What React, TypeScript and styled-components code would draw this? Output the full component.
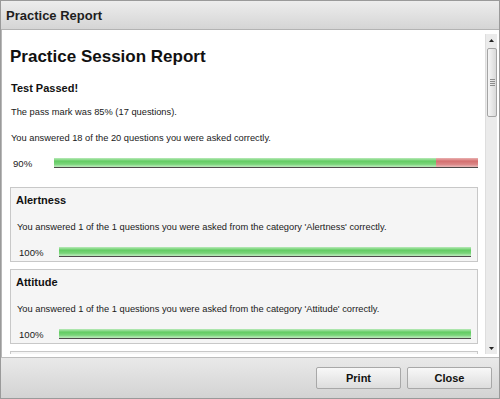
import React from 'react'
import styled, {createGlobalStyle} from 'styled-components'

const GlobalStyle = createGlobalStyle`
  html, body {
    margin: 0;
    padding: 0;
    background: #fff;
  }
  body {
    font-family: "Liberation Sans", Arial, sans-serif;
    color: #111;
  }
  * {
    box-sizing: border-box;
  }
`

const Window = styled.div`
  width: 500px;
  height: 399px;
  display: flex;
  flex-direction: column;
  border: 1px solid #9a9a9a;
  background: #fff;
  overflow: hidden;
`

const TitleBar = styled.div`
  flex: none;
  height: 29px;
  display: flex;
  align-items: center;
  padding-left: 5px;
  background: linear-gradient(to bottom, #ededed, #d5d5d5);
  border-bottom: 1px solid #b3b3b3;
  font-size: 13px;
  font-weight: bold;
  color: #1e1e1e;
`

const Body = styled.div`
  flex: 1;
  min-height: 0;
  display: flex;
  padding: 4px 2px 3px 1px;
  border-left: 1px solid #b8b8b8;
  background: #fff;
`

const Viewport = styled.div`
  flex: 1;
  min-width: 0;
  overflow: hidden;
  padding: 0 7px 0 7px;
`

const Heading = styled.h1`
  margin: 13px 0 0;
  font-size: 17px;
  line-height: 20px;
  font-weight: bold;
  color: #111;
`

const Status = styled.h2`
  margin: 14px 0 0 1px;
  font-size: 11px;
  line-height: 14px;
  font-weight: bold;
  color: #111;
`

const Para = styled.p<{$gap?: number}>`
  margin: ${p => p.$gap ?? 14}px 0 0 1px;
  font-size: 9.3px;
  line-height: 12px;
  color: #1a1a1a;
`

const ProgressRow = styled.div<{$gap: number; $label: number}>`
  display: flex;
  align-items: flex-end;
  margin-top: ${p => p.$gap}px;
  padding-left: 3px;
  height: 10px;

  & > span {
    flex: none;
    width: ${p => p.$label}px;
    font-size: 9.6px;
    line-height: 8px;
    color: #1a1a1a;
  }
`

const Track = styled.div`
  flex: 1;
  height: 10px;
  display: flex;
  background: linear-gradient(to bottom, #eab2b2 0%, #d46f6f 35%, #dc8a8a 75%, #e7b0b0 90%);
  border-bottom: 1px solid #4e4a4a;
`

const Fill = styled.div`
  height: 100%;
  background: linear-gradient(to bottom, #b9eab9 0%, #63cc63 35%, #7bd57b 70%, #b1e6b1 90%);
`

const Panel = styled.section<{$first?: boolean}>`
  margin-top: ${p => (p.$first ? 19 : 7)}px;
  padding: 5px 6px 4px 5px;
  border: 1px solid #c8c8c8;
  background: #f5f5f5;
`

const PanelTitle = styled.h3`
  margin: 0;
  font-size: 11px;
  line-height: 14px;
  font-weight: bold;
  color: #111;
`

const ScrollBar = styled.div`
  flex: none;
  width: 12px;
  display: flex;
  flex-direction: column;
  background: #ebebeb;
  border-left: 1px solid #dedede;
`

const ArrowButton = styled.div`
  flex: none;
  height: 12px;
  display: flex;
  align-items: center;
  justify-content: center;
`

const Thumb = styled.div`
  flex: none;
  margin: 2px 0 0 1px;
  width: 10px;
  height: 69px;
  display: flex;
  align-items: center;
  justify-content: center;
  border: 1px solid #a4a4a4;
  border-radius: 2px;
  background: linear-gradient(to right, #f6f6f6, #d9d9d9);
`

const Grip = styled.div`
  width: 5px;
  height: 8px;
  background: repeating-linear-gradient(to bottom, #8c8c8c 0 1px, transparent 1px 2px);
`

const Spacer = styled.div`
  flex: 1;
`

const Footer = styled.div`
  flex: none;
  height: 41px;
  display: flex;
  align-items: center;
  justify-content: flex-end;
  gap: 6px;
  padding-right: 7px;
  border-top: 1px solid #bdbdbd;
  background: linear-gradient(to bottom, #e9e9e9, #d3d3d3);
`

const Button = styled.button`
  width: 85px;
  height: 22px;
  padding: 0;
  border: 1px solid #a8a8a8;
  border-radius: 2px;
  background: linear-gradient(to bottom, #f8f8f8, #dddddd);
  font-family: "Liberation Sans", Arial, sans-serif;
  font-size: 11px;
  font-weight: bold;
  color: #111;
`

const categories = [
  {name: 'Alertness', asked: 1, correct: 1},
  {name: 'Attitude', asked: 1, correct: 1},
  {name: 'Safety and Your Vehicle', asked: 2, correct: 2},
]

const Progress = ({value, gap, label}: {value: number; gap: number; label: number}) => (
  <ProgressRow $gap={gap} $label={label}>
    <span>{value}%</span>
    <Track>
      <Fill style={{width: `${value}%`}} />
    </Track>
  </ProgressRow>
)

const Arrow = ({up}: {up?: boolean}) => (
  <svg width="5" height="3" viewBox="0 0 5 3">
    <path d={up ? 'M0 3 L2.5 0 L5 3 Z' : 'M0 0 L2.5 3 L5 0 Z'} fill="#222" />
  </svg>
)

const App = () => {
  return (
    <>
      <GlobalStyle />
      <Window>
        <TitleBar>Practice Report</TitleBar>
        <Body>
          <Viewport>
            <Heading>Practice Session Report</Heading>
            <Status>Test Passed!</Status>
            <Para $gap={11}>The pass mark was 85% (17 questions).</Para>
            <Para>You answered 18 of the 20 questions you were asked correctly.</Para>
            <Progress value={90} gap={14} label={41} />
            {categories.map((c, i) => (
              <Panel key={c.name} $first={i === 0}>
                <PanelTitle>{c.name}</PanelTitle>
                <Para>
                  You answered {c.correct} of the {c.asked} questions you were asked from the
                  category '{c.name}' correctly.
                </Para>
                <Progress value={Math.round((c.correct / c.asked) * 100)} gap={14} label={40} />
              </Panel>
            ))}
          </Viewport>
          <ScrollBar>
            <ArrowButton>
              <Arrow up />
            </ArrowButton>
            <Thumb>
              <Grip />
            </Thumb>
            <Spacer />
            <ArrowButton>
              <Arrow />
            </ArrowButton>
          </ScrollBar>
        </Body>
        <Footer>
          <Button>Print</Button>
          <Button>Close</Button>
        </Footer>
      </Window>
    </>
  )
}

export default App
